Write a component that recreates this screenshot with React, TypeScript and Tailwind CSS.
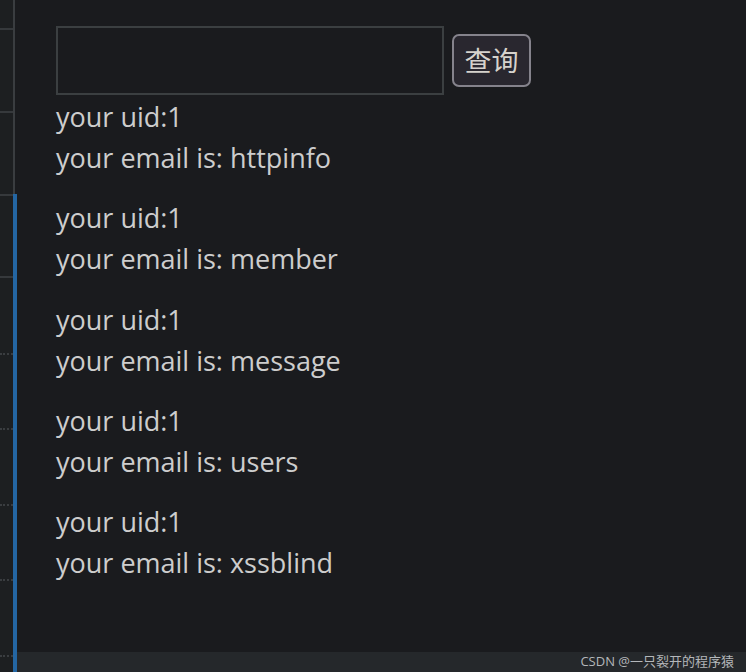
const results = ["httpinfo", "member", "message", "users", "xssblind"];

function SideRow({ h, dotted = false }: { h: number; dotted?: boolean }) {
  return (
    <div
      className={
        dotted
          ? "shrink-0 border-b-2 border-dotted border-[#3a3d40]"
          : "shrink-0 border-b-2 border-[#36393c]"
      }
      style={{ height: h }}
    />
  );
}

export default function App() {
  return (
    <div
      className="flex h-[672px] w-[746px] overflow-hidden bg-[#1a1b1e] text-[#cdcdcd]"
      style={{ fontFamily: '"Open Sans", "Noto Sans CJK SC", sans-serif' }}
    >
      {/* left gutter */}
      <div className="flex w-[13px] shrink-0 flex-col bg-[#1d1f21]">
        <SideRow h={30} />
        <SideRow h={83} />
        <SideRow h={83} />
        <SideRow h={82} />
        <SideRow h={77} dotted />
        <SideRow h={75} dotted />
        <SideRow h={76} dotted />
        <SideRow h={75} dotted />
        <SideRow h={76} dotted />
      </div>

      {/* divider */}
      <div className="flex w-[4px] shrink-0 flex-col">
        <div className="h-[194px] w-[2px] bg-[#3a3d40]" />
        <div className="flex-1 bg-[#2466a3]" />
      </div>

      <div className="flex flex-1 flex-col">
        <div className="flex-1 pl-[39px] pt-[26px]">
          <div className="flex items-center gap-[8px]">
            <input
              type="text"
              className="h-[69px] w-[388px] border-2 border-[#3b3f41] bg-[#1a1b1e] outline-none"
            />
            <button className="h-[53px] w-[79px] rounded-[7px] border-2 border-[#85838c] bg-[#29272f] text-[27px] leading-none text-[#d6d2cc]">
              查询
            </button>
          </div>
          <div className="mt-[1px] text-[27px] leading-[41px]">
            {results.map((name, i) => (
              <div key={i} className={i === 0 ? "" : "mt-[19.25px]"}>
                <div>your uid:1</div>
                <div>your email is: {name}</div>
              </div>
            ))}
          </div>
        </div>
        <div className="flex h-[20px] items-center justify-end bg-[#25282b] pr-[12px] text-[13px] text-[#b4b7ba]">
          CSDN @一只裂开的程序猿
        </div>
      </div>
    </div>
  );
}
